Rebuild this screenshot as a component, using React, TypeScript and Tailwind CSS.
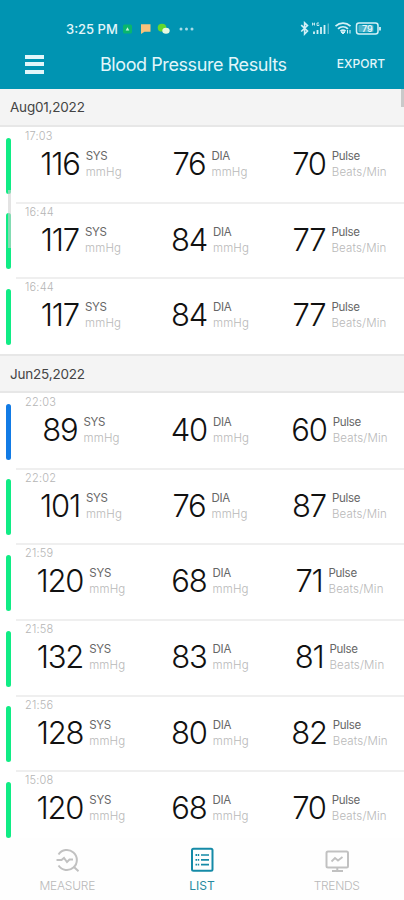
import clsx from "clsx";

type Reading = {
  time: string;
  sys: number;
  dia: number;
  pulse: number;
  low?: boolean;
};

const groups: { date: string; readings: Reading[] }[] = [
  {
    date: "Aug01,2022",
    readings: [
      { time: "17:03", sys: 116, dia: 76, pulse: 70 },
      { time: "16:44", sys: 117, dia: 84, pulse: 77 },
      { time: "16:44", sys: 117, dia: 84, pulse: 77 },
    ],
  },
  {
    date: "Jun25,2022",
    readings: [
      { time: "22:03", sys: 89, dia: 40, pulse: 60, low: true },
      { time: "22:02", sys: 101, dia: 76, pulse: 87 },
      { time: "21:59", sys: 120, dia: 68, pulse: 71 },
      { time: "21:58", sys: 132, dia: 83, pulse: 81 },
      { time: "21:56", sys: 128, dia: 80, pulse: 82 },
      { time: "15:08", sys: 120, dia: 68, pulse: 70 },
    ],
  },
];

const StatusBar = () => (
  <div className="flex h-[40px] items-end pl-[66px] pr-[22px]">
    <span className="w-[53px] whitespace-nowrap text-[13px] font-medium leading-[22px]">3:25 PM</span>
    <svg className="mb-[5px] ml-[3px]" width="72" height="12" viewBox="0 0 72 12">
      <rect x="1" y="1.5" width="9" height="9" rx="1.5" fill="#09b66d" />
      <path d="M5.5 4.2 7.3 7.5H3.7z" fill="#c5f5dd" />
      <path d="M19 1.2h9.5v7.6h-6L19 11z" fill="#f7c27c" />
      <ellipse cx="40" cy="4.7" rx="4.3" ry="3.9" fill="#62d82d" />
      <ellipse cx="44" cy="7.8" rx="3.7" ry="3" fill="#e8f8df" />
      <g fill="#a9dce8">
        <circle cx="59" cy="6" r="1.5" />
        <circle cx="64.5" cy="6" r="1.5" />
        <circle cx="70" cy="6" r="1.5" />
      </g>
    </svg>
    <svg className="mb-[4px] ml-auto" width="82" height="15" viewBox="0 0 82 15" fill="none" stroke="#d3f0f6">
      <path d="M1.2 4.2 7.5 10 4.6 13V1.8L7.5 4.6 1.2 10.5" strokeWidth="1.6" />
      <path d="M12.5 4.5V1.7M14.5 4.5V1.7M12.5 3h2M19 2h-2v2.5h2V3.5" strokeWidth=".9" />
      <path d="M14 13v-2.5M17.5 13V9M21 13V6M24.5 13V4" strokeWidth="1.8" />
      <path d="M28.3 13V2.5" stroke="#5fb9cc" strokeWidth="1.4" />
      <path d="M35.5 5.2c4.5-4 10.5-4 15 0M38 7.8c3-2.7 7-2.7 10 0M40.5 10.3c1.5-1.3 3.5-1.3 5 0" strokeWidth="1.8" />
      <path d="m41 11 2 2 2-2z" fill="#d3f0f6" />
      <path d="M47.5 12.5V9M50 9v3.5" strokeWidth="1.1" />
      <rect x="56.5" y="2" width="21.5" height="11" rx="2.5" strokeWidth="1.5" />
      <rect x="58.5" y="4" width="15" height="7" rx="1" fill="#4cb3c9" stroke="none" />
      <path d="M80 6v3.5" strokeWidth="1.8" />
      <text x="62" y="10.800" fontSize="9" fontWeight="600" fill="#e2f6fa" stroke="none">79</text>
    </svg>
  </div>
);

const Value = ({ value, label, unit }: { value: number; label: string; unit: string }) => (
  <div className="flex justify-center gap-[6px]">
    <span className="text-[31px] font-light leading-[34px] tracking-[-1.2px] text-[#111]">{value}</span>
    <div className="whitespace-nowrap pt-px">
      <div className="text-[11.5px] leading-[16px] tracking-[-0.3px] text-[#666]">{label}</div>
      <div className="text-[11.5px] font-light leading-[16px] tracking-[0.15px] text-[#b9b9b9]">{unit}</div>
    </div>
  </div>
);

const Row = ({ reading, first }: { reading: Reading; first: boolean }) => (
  <div className="flex h-[75.6px]">
    <div
      className={clsx(
        "ml-[5.5px] mt-[10.5px] h-[56px] w-[5.5px] shrink-0 rounded-full",
        reading.low ? "bg-[#127be5]" : "bg-[#10ec85]",
      )}
    />
    <div className={clsx("-mt-px ml-[5px] flex-1 border-t-2", first ? "border-transparent" : "border-[#efefef]")}>
      <div className="pl-[9px] pt-px text-[11px] font-light leading-[14px] tracking-[0.2px] text-[#b5b5b5]">
        {reading.time}
      </div>
      <div className="grid grid-cols-[130px_128px_131px] pt-[4px]">
        <Value value={reading.sys} label="SYS" unit="mmHg" />
        <Value value={reading.dia} label="DIA" unit="mmHg" />
        <Value value={reading.pulse} label="Pulse" unit="Beats/Min" />
      </div>
    </div>
  </div>
);

const MeasureIcon = () => (
  <svg width="26" height="26" viewBox="0 0 26 26" fill="none" stroke="#c1c1c1" strokeWidth="2">
    <path d="M4.5 7.5a10 10 0 1 1 0 11M20.5 20.5l4 3.700" />
    <path d="M2.500 13h5l2.500-2 3 4 2.500-2.500h3.500" strokeWidth="2" />
  </svg>
);

const ListIcon = () => (
  <svg width="26" height="26" viewBox="0 0 26 26" fill="none" stroke="#158aa7" strokeWidth="2">
    <rect x="3" y="1.800" width="20.500" height="22" rx="1.500" />
    <path d="M12 8h8M12 12.800h8M12 17.600h8" strokeWidth="1.700" />
    <path d="M6.500 8h3.700M6.500 12.800h3.700M6.500 17.600h3.700" strokeDasharray="1.500 .7" strokeWidth="1.800" />
  </svg>
);

const TrendsIcon = () => (
  <svg width="26" height="26" viewBox="0 0 26 26" fill="none" stroke="#c1c1c1" strokeWidth="2">
    <rect x="2.500" y="4.500" width="21.500" height="16" rx="1.500" />
    <path d="m7.500 14.500 3.500-3.500 3 2.500 4.500-3.500" strokeWidth="1.800" />
    <path d="M13.300 20.500v3M8 24h11" strokeWidth="2" />
  </svg>
);

export default function App() {
  return (
    <div className="relative flex h-[900px] w-[404px] flex-col overflow-hidden bg-white font-['Inter',sans-serif]">
      <header className="h-[88.5px] shrink-0 bg-[#0094b2] text-[#e2f6fa]">
        <StatusBar />
        <div className="flex h-[48px] items-center pl-[25px] pr-[19px]">
          <div className="flex w-[75px] flex-col gap-[3.5px]">
            <div className="h-[4px] w-[19px] bg-current" />
            <div className="h-[4px] w-[19px] bg-current" />
            <div className="h-[4px] w-[19px] bg-current" />
          </div>
          <h1 className="whitespace-nowrap text-[18px] tracking-[-0.42px]">Blood Pressure Results</h1>
          <button className="ml-auto text-[12px] font-medium">EXPORT</button>
        </div>
      </header>

      <main className="min-h-0 flex-1 overflow-hidden">
        {groups.map((group, i) => (
          <section key={group.date}>
            <div
              className={clsx(
                "flex items-center border-b-2 border-[#e7e7e7] bg-[#f4f4f4] pl-[10px] pt-px text-[13.5px] tracking-[-0.2px] text-[#444]",
                i === 0 ? "h-[38.5px]" : "h-[39.5px] border-t-2",
              )}
            >
              {group.date}
            </div>
            {group.readings.map((reading, j) => (
              <Row key={j} reading={reading} first={j === 0} />
            ))}
          </section>
        ))}
      </main>

      <nav className="grid h-[62px] shrink-0 grid-cols-3 bg-[#fefefe] text-[12px] font-light text-[#b9b9b9]">
        <div className="flex flex-col items-center pt-[9px]">
          <MeasureIcon />
          <span className="mt-[5px] leading-[16px] tracking-[-0.2px]">MEASURE</span>
        </div>
        <div className="flex flex-col items-center pt-[9px] text-[#27899f]">
          <ListIcon />
          <span className="mt-[5px] font-normal leading-[16px]">LIST</span>
        </div>
        <div className="flex flex-col items-center pt-[9px]">
          <TrendsIcon />
          <span className="mt-[5px] leading-[16px] tracking-[-0.3px]">TRENDS</span>
        </div>
      </nav>

      {/* scroll indicators */}
      <div className="absolute left-[8px] top-[190px] h-[58px] w-[3px] bg-[#d0d0d0]/60" />
      <div className="absolute right-0 top-[89px] h-[18px] w-[3px] bg-[#c9c9c9]" />
    </div>
  );
}
